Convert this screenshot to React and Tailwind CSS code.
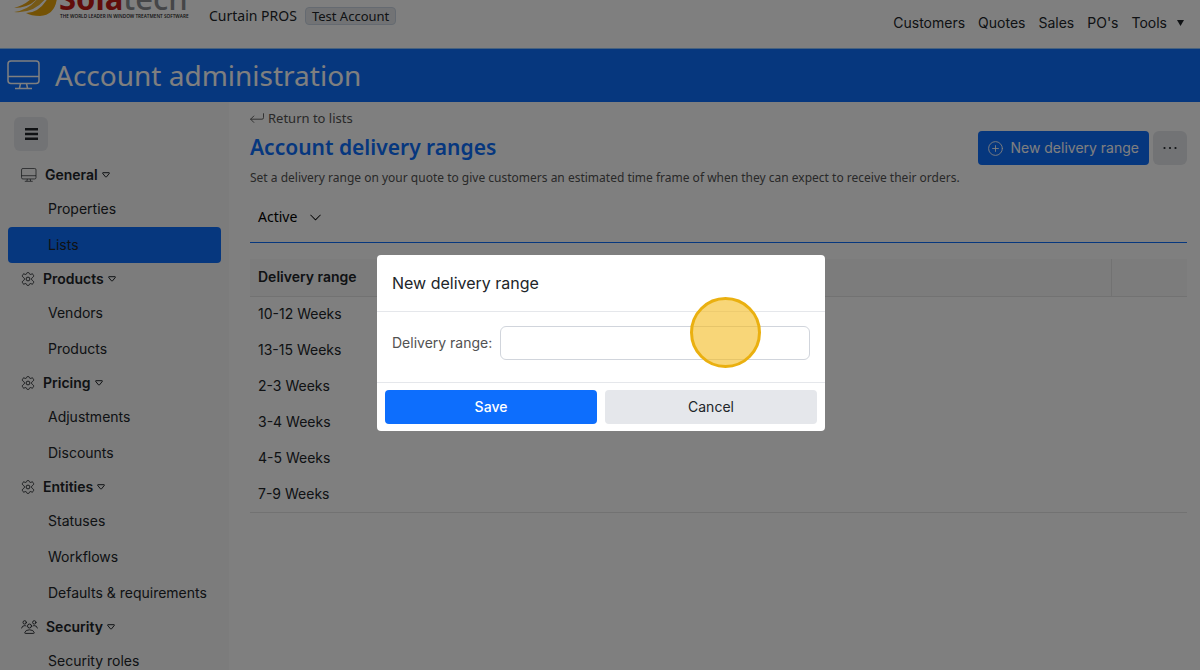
import { BsChevronDown } from 'react-icons/bs';

const menu = [
    { title: 'General', icon: 'display', items: ['Properties', 'Lists'] },
    { title: 'Products', icon: 'gear', items: ['Vendors', 'Products'] },
    { title: 'Pricing', icon: 'gear', items: ['Adjustments', 'Discounts'] },
    { title: 'Entities', icon: 'gear', items: ['Statuses', 'Workflows', 'Defaults & requirements'] },
    { title: 'Security', icon: 'people', items: ['Security roles'] },
];

const ranges = ['10-12 Weeks', '13-15 Weeks', '2-3 Weeks', '3-4 Weeks', '4-5 Weeks', '7-9 Weeks'];

function DisplayIcon({ className }) {
    return (
        <svg className={className} viewBox="0 0 34 30" fill="none" stroke="currentColor" strokeWidth="1.5" aria-hidden="true">
            <rect x="1" y="1" width="31" height="22.5" rx="3" />
            <path d="M1 16.5h31M13.5 23.5l-1 4.5M19.5 23.5l1 4.5M8 28.5h17" />
        </svg>
    );
}

function GearIcon() {
    return (
        <svg className="h-[14px] w-[14px]" viewBox="0 0 14 14" fill="none" stroke="currentColor" strokeWidth="0.9" strokeLinejoin="round" aria-hidden="true">
            <path d="M5.6 1.5Q5.8.6 6.5.6h1Q8.2.6 8.4 1.5Q8.6 2.6 9.7 2.4L10.8 2Q11.6 1.7 12 2.4l.6 1.1q.4.7-.3 1.3l-.8.6q-1 .8-1 1.6t1 1.6l.8.6q.7.6.3 1.3L12 11.6q-.4.7-1.2.4L9.7 11.6Q8.6 11.4 8.4 12.5Q8.2 13.4 7.5 13.4h-1Q5.8 13.4 5.6 12.5Q5.4 11.4 4.3 11.6L3.2 12Q2.4 12.3 2 11.6L1.4 10.5Q1 9.8 1.7 9.2L2.5 8.6q1-.8 1-1.6t-1-1.6L1.7 4.8Q1 4.2 1.4 3.5L2 2.4Q2.4 1.7 3.2 2L4.3 2.4Q5.4 2.6 5.6 1.5Z" />
            <circle cx="7" cy="7" r="1.9" />
        </svg>
    );
}

function PeopleIcon() {
    return (
        <svg className="h-[14px] w-[17px]" viewBox="0 0 17 14" fill="none" stroke="currentColor" strokeWidth="0.9" strokeLinecap="round" aria-hidden="true">
            <circle cx="3.7" cy="2.4" r="1.7" />
            <circle cx="13.3" cy="2.4" r="1.7" />
            <circle cx="8.5" cy="6" r="2" />
            <path d="M.6 8Q1 5.6 3.8 5.6q.7 0 1.2.3M16.4 8Q16 5.6 13.2 5.6q-.7 0-1.2.3M4 13.4q-.4 0-.2-.8Q4.4 9.8 8.5 9.8t4.7 2.8q.2.8-.2.8Z" />
        </svg>
    );
}

function MenuIcon({ name }) {
    if (name === 'display') return <DisplayIcon className="h-[14px] w-4" />;
    if (name === 'people') return <PeopleIcon />;
    return <GearIcon />;
}

function Logo() {
    return (
        <a href="#" aria-label="Solatech">
            <svg className="h-5 w-[192px]" viewBox="0 0 192 20">
                <path d="M14 8Q25 5 32-2h6Q29 8 14 8Z" fill="#e8a516" />
                <path d="M14 12Q29 10 38-2h8Q34 14 14 12Z" fill="#edb32d" />
                <path d="M26 13Q39 13 48-2h9Q55 15 40 16Q31 16 26 13Z" fill="#e9a50b" />
                <text x="59" y="10" fontSize="31" fontWeight="700" fontFamily="Noto Sans, sans-serif">
                    <tspan fill="#c21b17">Sola</tspan>
                    <tspan fill="#8a8c90" fontWeight="500">tech</tspan>
                </text>
                <text x="60" y="17.5" fontSize="4.7" fontWeight="600" fill="#222" fontFamily="Open Sans, sans-serif">
                    THE WORLD LEADER IN WINDOW TREATMENT SOFTWARE
                </text>
            </svg>
        </a>
    );
}

function Header() {
    return (
        <header className="flex h-12 shrink-0 items-start justify-between bg-white pr-4">
            <div className="flex">
                <Logo />
                <div className="ml-[17px] flex items-center gap-2 pt-1.5 font-['Noto_Sans',sans-serif] text-sm">
                    <span>Curtain PROS</span>
                    <span className="rounded border border-slate-300 bg-gray-200 px-1.5 text-[13px] leading-4">Test Account</span>
                </div>
            </div>
            <nav className="flex gap-[13px] pt-[11px] text-sm leading-6">
                <a href="#">Customers</a>
                <a href="#">Quotes</a>
                <a href="#">Sales</a>
                <a href="#">PO's</a>
                <a href="#" className="flex items-center gap-2.5">
                    Tools
                    <svg className="h-[6px] w-[7px]" viewBox="0 0 7 6" aria-hidden="true"><path d="M0 0h7L3.5 6Z" fill="currentColor" /></svg>
                </a>
            </nav>
        </header>
    );
}

function Sidebar() {
    return (
        <aside className="w-[229px] shrink-0 bg-[#f8f8f8] px-2 pt-[15px]">
            <button type="button" aria-label="Toggle menu" className="ml-1.5 mb-2 flex h-[34px] w-[34px] items-center justify-center rounded-md bg-gray-200">
                <svg className="h-3 w-[13px]" viewBox="0 0 13 12" fill="currentColor" aria-hidden="true">
                    <path d="M0 0h13v2.6H0zM0 4.7h13v2.6H0zM0 9.4h13v2.6H0z" />
                </svg>
            </button>
            {menu.map((group) => (
                <section key={group.title}>
                    <h2 className="flex h-8 items-center pl-[13px] text-sm font-semibold">
                        <MenuIcon name={group.icon} />
                        <span className="ml-2">{group.title}</span>
                        <svg className="ml-1 h-[6px] w-2" viewBox="0 0 8 6" fill="none" stroke="currentColor" strokeLinejoin="round" aria-hidden="true">
                            <path d="M.9.7h6.2Q7.7.7 7.3 1.4L4.5 4.9Q4 5.4 3.5 4.9L.7 1.4Q.3.7.9.7Z" />
                        </svg>
                    </h2>
                    {group.items.map((item) => (
                        <a
                            key={item}
                            href="#"
                            className={`flex h-9 items-center rounded pl-10 text-sm ${item === 'Lists' ? 'bg-[#0d6efd]' : ''}`}
                        >
                            {item}
                        </a>
                    ))}
                </section>
            ))}
        </aside>
    );
}

function Content() {
    return (
        <main className="min-w-0 flex-1 pt-[7px] pr-[13px] pl-[21px]">
            <div className="flex items-start justify-between">
                <div className="font-['Noto_Sans',sans-serif]">
                    <a href="#" className="flex items-center gap-1 text-[13px] leading-[18px] text-neutral-600">
                        <svg className="h-2.5 w-[14px]" viewBox="0 0 14 10" fill="none" stroke="currentColor" strokeWidth="0.9" strokeLinecap="round" strokeLinejoin="round" aria-hidden="true">
                            <path d="M13.5.7v4q0 1.5-1.5 1.5H.7M3.8 3L.6 6.2l3.2 3.2" />
                        </svg>
                        Return to lists
                    </a>
                    <h2 className="pt-1 text-[21px] leading-8 font-semibold text-[#0d6efd]">Account delivery ranges</h2>
                    <p className="pt-1 text-xs leading-[22px] text-neutral-600">
                        Set a delivery range on your quote to give customers an estimated time frame of when they can expect to receive their orders.
                    </p>
                </div>
                <div className="-ml-4 flex shrink-0 gap-1 pt-[22px]">
                    <button type="button" className="flex h-[34px] items-center gap-[7px] rounded bg-[#0d6efd] px-2.5 text-sm text-white">
                        <svg className="h-[15px] w-[15px]" viewBox="0 0 15 15" fill="none" stroke="currentColor" strokeWidth="0.9" strokeLinecap="round" aria-hidden="true">
                            <circle cx="7.5" cy="7.5" r="6.9" />
                            <path d="M7.5 4.6v5.8M4.6 7.5h5.8" />
                        </svg>
                        New delivery range
                    </button>
                    <button type="button" aria-label="More" className="flex h-[34px] w-[34px] items-center justify-center rounded-md bg-gray-200">
                        <svg className="h-1 w-[14px]" viewBox="0 0 14 4" fill="currentColor" aria-hidden="true">
                            <circle cx="1.5" cy="2" r="1.1" />
                            <circle cx="7" cy="2" r="1.1" />
                            <circle cx="12.5" cy="2" r="1.1" />
                        </svg>
                    </button>
                </div>
            </div>

            <div className="mt-2 border-b border-[#0d6efd] px-2 pt-2 pb-[13px]">
                <button type="button" className="flex h-6 items-center gap-3 font-['Noto_Sans',sans-serif] text-sm text-black">
                    Active
                    <BsChevronDown className="h-[13px] w-[13px]" />
                </button>
            </div>

            <table className="mt-4 w-full border-b border-neutral-200 text-left text-sm">
                <thead>
                    <tr className="h-[37px] border-b border-neutral-200 bg-[#f8f8f8]">
                        <th className="px-2 font-semibold">Delivery range</th>
                        <th className="w-[76px] border-l border-neutral-200" aria-label="Actions"></th>
                    </tr>
                </thead>
                <tbody>
                    {ranges.map((range) => (
                        <tr key={range} className="h-9 leading-5">
                            <td className="px-2">{range}</td>
                            <td></td>
                        </tr>
                    ))}
                </tbody>
            </table>
        </main>
    );
}

function DeliveryRangeModal() {
    return (
        <div className="fixed inset-0 flex items-center justify-center bg-black/50 pt-[15px] pl-0.5">
            <form role="dialog" aria-labelledby="dialog-title" className="w-[448px] rounded bg-white" onSubmit={(e) => e.preventDefault()}>
                <h2 id="dialog-title" className="border-b border-gray-200 px-[15px] py-4 text-base leading-6">New delivery range</h2>
                <div className="flex items-center gap-2 px-[15px] pt-[14px] pb-[22px]">
                    <label htmlFor="range" className="text-sm text-neutral-600">Delivery range:</label>
                    <div className="relative flex-1">
                        <input id="range" type="text" className="block h-[34px] w-full rounded-md border border-gray-300 px-2 text-sm" />
                        {/* click highlight */}
                        <span className="pointer-events-none absolute -top-[29px] right-[49px] h-[71px] w-[71px] rounded-full border-3 border-[#eab010] bg-[#f4bb1e]/60" />
                    </div>
                </div>
                <div className="flex gap-2 border-t border-gray-200 px-2 py-[7px] text-sm">
                    <button type="submit" className="h-[34px] flex-1 rounded bg-[#0d6efd] font-medium text-white">Save</button>
                    <button type="button" className="h-[34px] flex-1 rounded bg-gray-200">Cancel</button>
                </div>
            </form>
        </div>
    );
}

export default function App() {
    return (
        <div className="flex h-screen flex-col overflow-hidden bg-white font-[Inter,sans-serif] text-[#212529]">
            <Header />
            <div className="flex h-[54px] shrink-0 items-center gap-[14px] border-t border-blue-300 bg-[#0d6efd] pb-0.5 pl-[7px] text-white">
                <DisplayIcon className="h-[30px] w-[34px]" />
                <h1 className="font-['Noto_Sans',sans-serif] text-[28px]">Account administration</h1>
            </div>
            <div className="flex min-h-0 flex-1">
                <Sidebar />
                <Content />
            </div>
            <DeliveryRangeModal />
        </div>
    );
}
